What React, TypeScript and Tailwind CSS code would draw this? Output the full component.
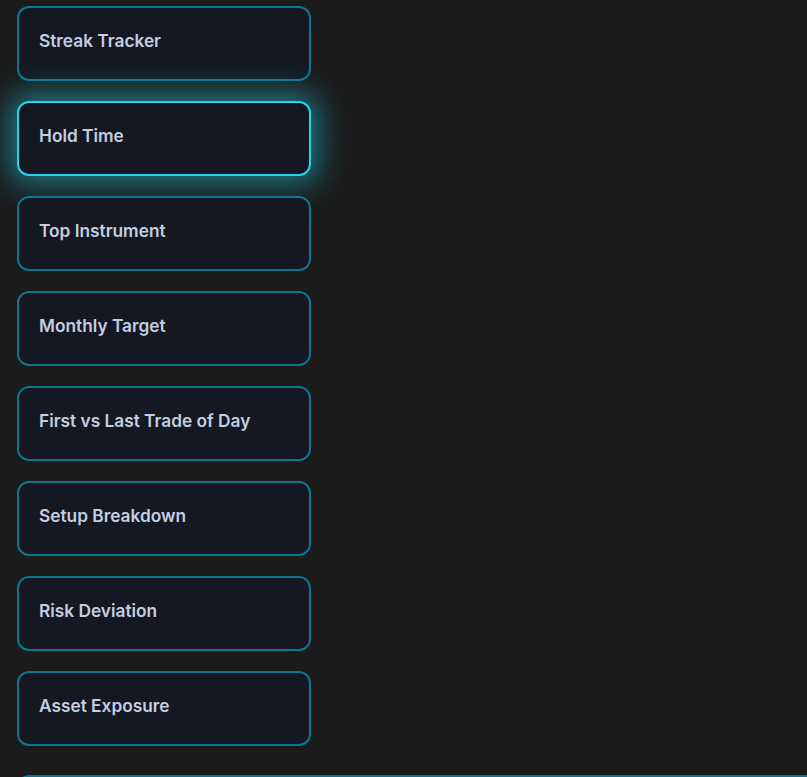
import React from 'react';

const items = [
  'Streak Tracker',
  'Hold Time',
  'Top Instrument',
  'Monthly Target',
  'First vs Last Trade of Day',
  'Setup Breakdown',
  'Risk Deviation',
  'Asset Exposure',
];

const App = () => {
  const active = 'Hold Time';

  return (
    <div className="h-screen bg-[#1b1b1b] font-['Inter',sans-serif] overflow-hidden">
      <div className="flex flex-col items-start gap-[20px] pl-[17px] pt-[6px]">
        {items.map((label) => (
          <button
            key={label}
            className={
              label === active
                ? 'h-[75px] w-[294px] rounded-xl border-2 border-[#22d3ee] bg-[#151821] px-5 pb-[5px] text-left text-[17.3px] font-semibold text-[#c3cee2] shadow-[0_0_30px_8px_rgba(34,211,238,0.5)]'
                : 'h-[75px] w-[294px] rounded-xl border-2 border-[#0e7490] bg-[#151821] px-5 pb-[5px] text-left text-[17.3px] font-semibold text-[#c3cee2]'
            }
          >
            {label}
          </button>
        ))}
        {/* next, wider panel: only its top edge is on screen */}
        <div className="mt-[9px] h-[74px] w-[820px] rounded-xl border-2 border-[#0e7490] bg-[#151821]" />
      </div>
    </div>
  );
};

export default App;
